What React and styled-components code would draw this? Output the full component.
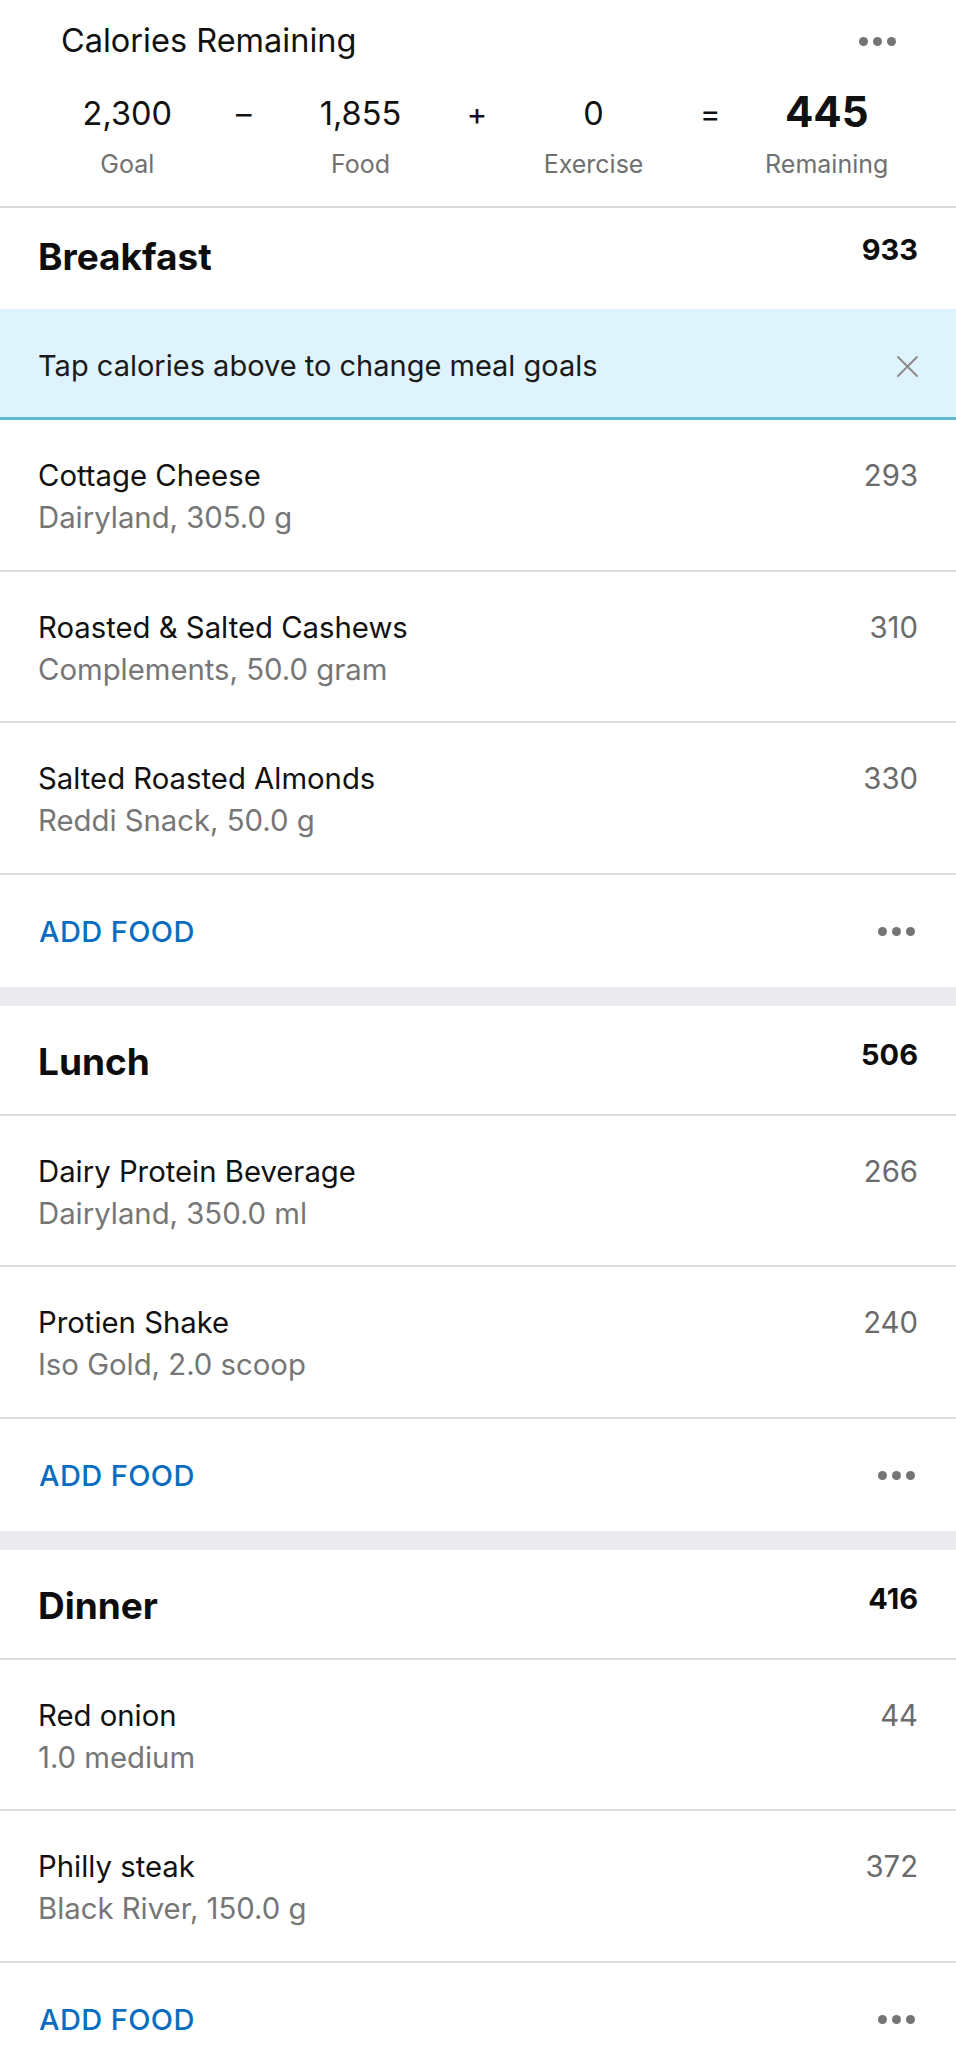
import styled, { createGlobalStyle } from "styled-components"

const GlobalStyle = createGlobalStyle`
  body {
    margin: 0;
    background: #ffffff;
    font-family: Inter, "Noto Sans", "Liberation Sans", sans-serif;
    color: #111111;
    -webkit-font-smoothing: antialiased;
  }
`

const meals = [
  {
    name: "Breakfast",
    total: 933,
    tip: "Tap calories above to change meal goals",
    foods: [
      { name: "Cottage Cheese", detail: "Dairyland, 305.0 g", cal: 293 },
      { name: "Roasted & Salted Cashews", detail: "Complements, 50.0 gram", cal: 310 },
      { name: "Salted Roasted Almonds", detail: "Reddi Snack, 50.0 g", cal: 330 },
    ],
  },
  {
    name: "Lunch",
    total: 506,
    foods: [
      { name: "Dairy Protein Beverage", detail: "Dairyland, 350.0 ml", cal: 266 },
      { name: "Protien Shake", detail: "Iso Gold, 2.0 scoop", cal: 240 },
    ],
  },
  {
    name: "Dinner",
    total: 416,
    foods: [
      { name: "Red onion", detail: "1.0 medium", cal: 44 },
      { name: "Philly steak", detail: "Black River, 150.0 g", cal: 372 },
    ],
  },
]

const Page = styled.div`
  display: flex;
  flex-direction: column;
  background: #ffffff;
`

const Summary = styled.header`
  padding: 21px 0 27px;
  border-bottom: 2px solid #dadada;
`

const SummaryTop = styled.div`
  display: flex;
  align-items: center;
  justify-content: space-between;
  padding: 0 60px 0 61px;
`

const SummaryTitle = styled.h1`
  margin: 0;
  font-size: 32.5px;
  font-weight: 400;
  line-height: 40px;
  color: #111111;
`

const StatsGrid = styled.div`
  display: grid;
  grid-template-columns: repeat(7, minmax(0, 1fr));
  padding: 0 71px 0 69px;
  margin-top: 31px;
`

const Stat = styled.div`
  display: flex;
  flex-direction: column;
  align-items: center;
  white-space: nowrap;
`

const StatValue = styled.span`
  font-size: ${ p => p.$strong ? 42 : 32.5 }px;
  font-weight: ${ p => p.$strong ? 700 : 400 };
  line-height: 44px;
  color: #111111;
  ${ p => p.$strong && "transform: translateY(-2px);" }
`

const StatLabel = styled.span`
  margin-top: 13px;
  font-size: 25px;
  line-height: 30px;
  color: #707070;
`

const Operator = styled.span`
  text-align: center;
  font-size: 31px;
  line-height: 44px;
  color: #111111;
`

const Dots = styled.span`
  display: flex;
  gap: 5px;
`

const Dot = styled.span`
  width: 9px;
  height: 9px;
  border-radius: 50%;
  background: #747474;
`

const MealList = styled.div`
  display: flex;
  flex-direction: column;
  gap: 19px;
  background: #ebebef;
`

const Meal = styled.section`
  background: #ffffff;
`

const MealHeader = styled.div`
  display: flex;
  justify-content: space-between;
  align-items: flex-start;
  box-sizing: border-box;
  height: ${ p => p.$first ? 101 : 110 }px;
  padding: ${ p => p.$first ? 29 : 36 }px 38px 0 38px;
  border-bottom: ${ p => p.$first ? "none" : "2px solid #dcdcdc" };
`

const MealTitle = styled.h2`
  margin: 0;
  font-size: 37px;
  font-weight: 700;
  line-height: 40px;
  color: #0d0d0d;
`

const MealTotal = styled.span`
  font-size: 29px;
  font-weight: 700;
  line-height: 26px;
  color: #0d0d0d;
`

const Tip = styled.div`
  display: flex;
  align-items: center;
  justify-content: space-between;
  box-sizing: border-box;
  height: 111px;
  padding: 6px 37px 0 38px;
  background: #dff3fc;
  border-bottom: 3px solid #5bbad0;
`

const TipText = styled.span`
  font-size: 29px;
  line-height: 40px;
  color: #1a1a1a;
`

const CloseButton = styled.button`
  display: flex;
  padding: 0;
  border: none;
  background: none;
`

const FoodRow = styled.div`
  display: flex;
  justify-content: space-between;
  align-items: flex-start;
  box-sizing: border-box;
  height: 151.5px;
  padding: 35px 38px 0 38px;
  border-bottom: 2px solid #dcdcdc;
`

const FoodInfo = styled.div`
  display: flex;
  flex-direction: column;
`

const FoodName = styled.span`
  font-size: 29.3px;
  line-height: 42px;
  color: #111111;
`

const FoodDetail = styled.span`
  font-size: 29.3px;
  line-height: 42px;
  color: #767676;
`

const FoodCal = styled.span`
  font-size: 29.3px;
  line-height: 42px;
  color: #6b6b6b;
`

const AddRow = styled.div`
  display: flex;
  align-items: center;
  justify-content: space-between;
  box-sizing: border-box;
  height: 112px;
  padding: 1px 41px 0 39px;
`

const AddButton = styled.button`
  padding: 0;
  border: none;
  background: none;
  font-family: inherit;
  font-size: 29px;
  font-weight: 500;
  letter-spacing: 0.4px;
  color: #0a6dbf;
`

function MoreDots() {
  return (
    <Dots>
      <Dot/><Dot/><Dot/>
    </Dots>
  )
}

function CloseIcon() {
  return (
    <svg width="23" height="23" viewBox="0 0 23 23">
      <path d="M2 2 L21 21 M21 2 L2 21" stroke="#8c8c8c" strokeWidth="2" strokeLinecap="round" fill="none" />
    </svg>
  )
}

function App() {
  return (
    <Page>
      <GlobalStyle/>
      <Summary>
        <SummaryTop>
          <SummaryTitle>Calories Remaining</SummaryTitle>
          <MoreDots/>
        </SummaryTop>
        <StatsGrid>
          <Stat><StatValue>2,300</StatValue><StatLabel>Goal</StatLabel></Stat>
          <Operator>–</Operator>
          <Stat><StatValue>1,855</StatValue><StatLabel>Food</StatLabel></Stat>
          <Operator>+</Operator>
          <Stat><StatValue>0</StatValue><StatLabel>Exercise</StatLabel></Stat>
          <Operator>=</Operator>
          <Stat><StatValue $strong>445</StatValue><StatLabel>Remaining</StatLabel></Stat>
        </StatsGrid>
      </Summary>
      <MealList>
        { meals.map((meal, i) => (
          <Meal key={ meal.name }>
            <MealHeader $first={ i === 0 }>
              <MealTitle>{ meal.name }</MealTitle>
              <MealTotal>{ meal.total }</MealTotal>
            </MealHeader>
            { meal.tip && (
              <Tip>
                <TipText>{ meal.tip }</TipText>
                <CloseButton><CloseIcon/></CloseButton>
              </Tip>
            ) }
            { meal.foods.map(food => (
              <FoodRow key={ food.name }>
                <FoodInfo>
                  <FoodName>{ food.name }</FoodName>
                  <FoodDetail>{ food.detail }</FoodDetail>
                </FoodInfo>
                <FoodCal>{ food.cal }</FoodCal>
              </FoodRow>
            )) }
            <AddRow>
              <AddButton>ADD FOOD</AddButton>
              <MoreDots/>
            </AddRow>
          </Meal>
        )) }
      </MealList>
    </Page>
  )
}

export default App
